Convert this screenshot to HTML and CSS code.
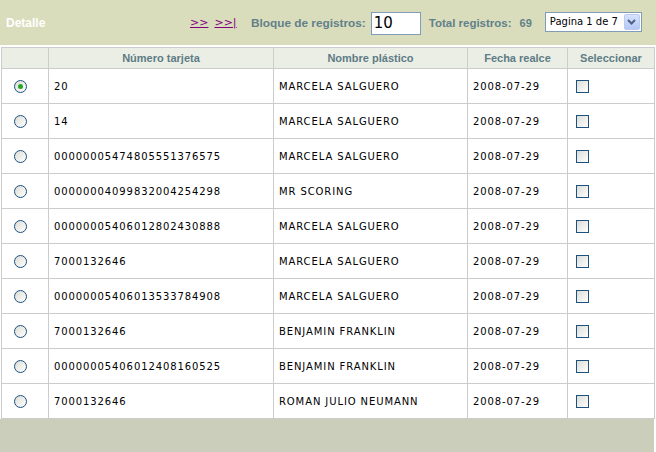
FILE: index.html
```html
<!DOCTYPE html>
<html>
<head>
<meta charset="utf-8">
<link rel="stylesheet" href="styles.css">
</head>
<body>
<div class="page">
  <div class="topbar">
    <span class="title">Detalle</span>
    <span class="nav"><a href="#">&gt;&gt;</a><a href="#">&gt;&gt;|</a></span>
    <span class="label">Bloque de registros:</span>
    <span class="input">10</span>
    <span class="label total">Total registros:</span>
    <span class="label count">69</span>
    <span class="select"><span class="sel-text">Pagina 1 de 7</span><span class="sel-btn"><svg width="9" height="6" viewBox="0 0 9 6"><path d="M1 1 L4.5 4.5 L8 1" fill="none" stroke="#4d6185" stroke-width="2"/></svg></span></span>
  </div>
  <table class="grid">
    <colgroup>
      <col class="c1"><col class="c2"><col class="c3"><col class="c4"><col class="c5">
    </colgroup>
    <thead>
      <tr><th></th><th>Número tarjeta</th><th>Nombre plástico</th><th>Fecha realce</th><th>Seleccionar</th></tr>
    </thead>
    <tbody>
      <tr><td class="rc"><span class="radio on"></span></td><td>20</td><td>MARCELA SALGUERO</td><td>2008-07-29</td><td class="cc"><span class="check"></span></td></tr>
      <tr><td class="rc"><span class="radio"></span></td><td>14</td><td>MARCELA SALGUERO</td><td>2008-07-29</td><td class="cc"><span class="check"></span></td></tr>
      <tr><td class="rc"><span class="radio"></span></td><td>00000005474805551376575</td><td>MARCELA SALGUERO</td><td>2008-07-29</td><td class="cc"><span class="check"></span></td></tr>
      <tr><td class="rc"><span class="radio"></span></td><td>00000004099832004254298</td><td>MR SCORING</td><td>2008-07-29</td><td class="cc"><span class="check"></span></td></tr>
      <tr><td class="rc"><span class="radio"></span></td><td>00000005406012802430888</td><td>MARCELA SALGUERO</td><td>2008-07-29</td><td class="cc"><span class="check"></span></td></tr>
      <tr><td class="rc"><span class="radio"></span></td><td>7000132646</td><td>MARCELA SALGUERO</td><td>2008-07-29</td><td class="cc"><span class="check"></span></td></tr>
      <tr><td class="rc"><span class="radio"></span></td><td>00000005406013533784908</td><td>MARCELA SALGUERO</td><td>2008-07-29</td><td class="cc"><span class="check"></span></td></tr>
      <tr><td class="rc"><span class="radio"></span></td><td>7000132646</td><td>BENJAMIN FRANKLIN</td><td>2008-07-29</td><td class="cc"><span class="check"></span></td></tr>
      <tr><td class="rc"><span class="radio"></span></td><td>00000005406012408160525</td><td>BENJAMIN FRANKLIN</td><td>2008-07-29</td><td class="cc"><span class="check"></span></td></tr>
      <tr><td class="rc"><span class="radio"></span></td><td>7000132646</td><td>ROMAN JULIO NEUMANN</td><td>2008-07-29</td><td class="cc"><span class="check"></span></td></tr>
    </tbody>
  </table>
  <div class="footer"></div>
</div>
</body>
</html>
```

FILE: styles.css
```css
html, body {
  margin: 0;
  padding: 0;
  background: #ffffff;
}
.page {
  width: 656px;
  height: 452px;
  overflow: hidden;
  font-family: "Liberation Sans", Arial, sans-serif;
}
.topbar {
  height: 45px;
  background: #d9ddbb;
  display: flex;
  align-items: center;
  margin-bottom: 2px;
}
.title {
  color: #ffffff;
  font-weight: bold;
  font-size: 12px;
  margin-left: 6px;
  width: 184px;
}
.nav {
  display: flex;
  gap: 6px;
  font-family: "DejaVu Sans", Verdana, sans-serif;
  font-size: 11px;
  width: 61px;
}
.nav a {
  color: #800080;
  text-decoration: underline;
}
.label {
  color: #62808a;
  font-weight: bold;
  font-size: 11.8px;
}
.input {
  box-sizing: border-box;
  width: 50px;
  height: 23px;
  margin-left: 5px;
  border: 1px solid #7f9db9;
  background: #ffffff;
  font-size: 15px;
  line-height: 21px;
  padding-left: 2px;
  color: #000;
  font-family: "DejaVu Sans", Verdana, sans-serif;
  transform: translateY(1px);
}
.total {
  margin-left: 8px;
  font-size: 11.5px;
}
.count {
  margin-left: 8px;
  font-size: 11px;
}
.select {
  box-sizing: border-box;
  margin-left: 13px;
  width: 97px;
  height: 20px;
  border: 1px solid #7f9db9;
  background: #fff;
  display: flex;
  align-items: center;
  justify-content: space-between;
  padding: 0 1px 0 4px;
  transform: translateY(-1px);
}
.sel-text {
  font-family: "DejaVu Sans", Verdana, sans-serif;
  font-size: 10px;
  color: #000;
}
.sel-btn {
  width: 16px;
  height: 16px;
  box-sizing: border-box;
  border: 1px solid #bccaf0;
  border-radius: 2px;
  background: linear-gradient(#d6e2fd, #b4c8f6);
  display: flex;
  align-items: center;
  justify-content: center;
}
.grid {
  border-collapse: collapse;
  table-layout: fixed;
  width: 653px;
  margin-left: 1px;
}
.c1 { width: 47px; }
.c2 { width: 225px; }
.c3 { width: 194px; }
.c4 { width: 100px; }
.c5 { width: 87px; }
.grid th, .grid td {
  border: 1px solid #cccccc;
  padding: 0;
}
.grid th {
  height: 20px;
  background: #ebeee4;
  color: #5d7c86;
  font-weight: bold;
  font-size: 11px;
  text-align: center;
}
.grid td {
  height: 34px;
  font-family: "DejaVu Sans", Verdana, sans-serif;
  font-size: 10px;
  letter-spacing: 0.9px;
  color: #000;
  padding-left: 5px;
}
.grid td.rc {
  padding-left: 12px;
}
.grid td.cc {
  padding-left: 8px;
}
.radio {
  display: block;
  box-sizing: border-box;
  width: 13px;
  height: 13px;
  border-radius: 50%;
  border: 1px solid #1c5180;
  background: linear-gradient(135deg, #dcdcd6, #ffffff);
  position: relative;
}
.radio.on::after {
  content: "";
  position: absolute;
  left: 3px;
  top: 3px;
  width: 5px;
  height: 5px;
  border-radius: 50%;
  background: #24a624;
}
.check {
  display: block;
  box-sizing: border-box;
  width: 13px;
  height: 13px;
  border: 1px solid #1c5180;
  background: linear-gradient(135deg, #dcdcd6, #ffffff);
}
.footer {
  width: 654px;
  height: 40px;
  background: #cbcebb;
}
```
